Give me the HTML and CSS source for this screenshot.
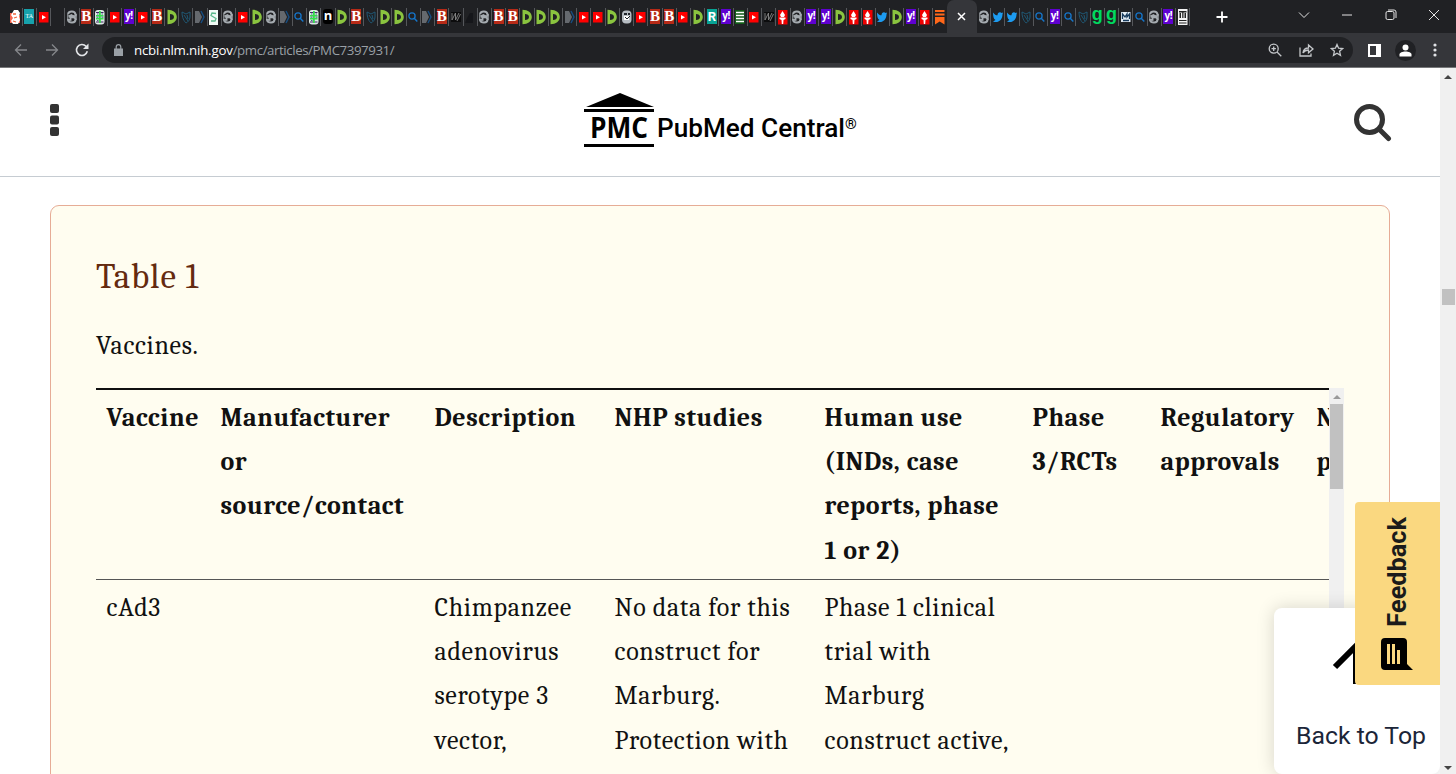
FILE: index.html
```html
<!DOCTYPE html>
<html lang="en">
<head>
<meta charset="utf-8">
<title>PubMed Central</title>
<link rel="stylesheet" href="styles.css">
</head>
<body>
<svg class="sprites" aria-hidden="true">
  <symbol id="i-blank" viewBox="0 0 10 16"></symbol>
  <symbol id="i-pink" viewBox="0 0 10 16"><path fill="#f4654f" d="M0 4h3v10H0zM6 6h4v8H6z"/><path fill="#fff" d="M4 1h4l2 3-1 3 1 4-2 4H3l-2-3 2-3-2-3z"/><path stroke="#f0643c" fill="none" stroke-width="1.3" d="M3 5h3M4 9l3-1M3 12l3 1"/></symbol>
  <symbol id="i-yt" viewBox="0 0 10 16"><rect y="3" width="9.500" height="10.500" fill="#f00"/><path fill="#fff" d="M3 6l4 2.3-4 2.3z"/></symbol>
  <symbol id="i-globe" viewBox="0 0 10 16"><path fill="none" stroke="#a5abb0" stroke-width="2" d="M1 5C2 1.500 8 1.500 8.600 5.500 9 8 6 7.500 4.500 6.200L1.500 7.500M2.500 9c3-1.500 6-1 6 1.500 0 4-6.500 4-7.500.500l3.500-.3"/><path fill="none" stroke="#a5abb0" stroke-width="1" d="M.8 5v6M9.200 5v6"/></symbol>
  <symbol id="i-jar" viewBox="0 0 10 16"><rect y="1" width="9.500" height="14.500" rx="3" fill="#dce9e4"/><path fill="#426" d="M1 3h7.500v1H1zM1 12.500h7.500v1H1z"/><path fill="#35dc4c" d="M4 2h1.800v12H4zM1 6h7.500v1.500H1zM1 9h7.500v1.500H1z"/><path stroke="#246" stroke-width=".8" d="M1.500 8.200h2M6.500 8.200h2M2 5h1.500M6.500 5H8M2 11.500h1.500"/></symbol>
  <symbol id="i-d" viewBox="0 0 10 16"><path fill="#8ac43f" fill-rule="evenodd" d="M.5.8c5.500 0 9.300 3 9.300 7.200s-3.800 7.200-9.300 7.200zM3 5v6c2.500 0 4-1.200 4-3S5.500 5 3 5z"/></symbol>
  <symbol id="i-shield" viewBox="0 0 10 16"><path fill="none" stroke="#1f5874" stroke-width="1" d="M1 3l4 2 4-2v5c0 3-2 5-4 6-2-2-4-5-4-11M3 6l4 6M6 6l1 4"/></symbol>
  <symbol id="i-chev" viewBox="0 0 10 16"><path fill="#65696e" d="M0 2h4l3 6-3 6H0z"/><path fill="none" stroke="#174e83" stroke-width="1.400" d="M6 2l3 6-3 6"/></symbol>
  <symbol id="i-mint" viewBox="0 0 10 16"><path fill="#f2fbf6" d="M0 1h9v15H0z"/><path fill="none" stroke="#5bb98c" stroke-width="1.300" d="M7 4.500L3 4 2 6.500l5 3L6 12H2"/></symbol>
  <symbol id="i-find" viewBox="0 0 10 16"><circle cx="4" cy="7" r="3.100" fill="none" stroke="#1574c8" stroke-width="1.300"/><path stroke="#1574c8" stroke-width="1.400" d="M6 9l3.300 3.500"/></symbol>
  <symbol id="i-w" viewBox="0 0 10 16"><path fill="#0c0c0d" d="M0 3h10v10H0z"/><path stroke="#8a8a8a" stroke-width=".9" fill="none" d="M1 4v7l3.500-7v7L8 4M6 12l3.500-7"/></symbol>
  <symbol id="i-dark" viewBox="0 0 10 16"><path fill="#15161a" d="M0 14l2-5 3-5h3v10z"/></symbol>
  <symbol id="i-face" viewBox="0 0 10 16"><rect y="1.500" width="9.500" height="13" rx="4" fill="#b6bcc2"/><path fill="#20242a" d="M2 4h3v2H2zM6 4h2v2H6z"/><path fill="#fff" d="M2 7h5v4H2z"/><path stroke="#20242a" fill="none" d="M3 8l2 2 3-3"/></symbol>
  <symbol id="i-lines" viewBox="0 0 10 16"><path fill="#115c17" d="M0 1h9.500v14H0z"/><path stroke="#fff" stroke-width="1.500" d="M1 3.500h8M1 6.500h8M1 9.500h8M1 12.500h8"/></symbol>
  <symbol id="i-torch" viewBox="0 0 10 16"><path fill="#f00000" d="M0 1h9.500v14.500H0z"/><path fill="#fff" d="M4.500 2L7 6 6 8H3L2 6zM1.500 8.500h6v1.500l-2 1-.3 4H3.800l-.3-4-2-1z"/></symbol>
  <symbol id="i-tw" viewBox="0 0 10 16"><path fill="#1d9bf0" d="M0 3.500c1.500 2 3 2.800 4.500 2.800C4.500 3.500 7 2.200 8.700 4L10 3.500l-.5 2C9.500 11 5 14.500 0 12.500l2.500-1.500C.5 10 0 7 0 3.500z"/></symbol>
  <symbol id="i-mark" viewBox="0 0 10 16"><path fill="#ff6719" d="M0 1h9.500v2H0zM0 4.500h9.500v2H0zM0 8h9.500v7.500L4.700 12.500 0 15.500z"/></symbol>
  <symbol id="i-m" viewBox="0 0 10 16"><path fill="#e3edf4" d="M0 3h9.500v10H0z"/><path fill="none" stroke="#163a5c" stroke-width="1.300" d="M1.500 10V5l2.500 3 2-3v3l2.500-3v5M2 11.500h6"/></symbol>
  <symbol id="i-t" viewBox="0 0 10 16"><path fill="#f4f4f4" d="M0 0h9.500v16H0z"/><path fill="#222" d="M1 2h7.500v1.500H1zM1.500 4H3v5H1.500zM4.200 2h1.300v7H4.200zM6.500 4H8v5H6.500zM1 11h7.500v1H1zM1 13.500h7.500v1H1z"/></symbol>
</svg>

<header class="browser">
  <div class="tabs">
    <div class="tab-group" data-icons="pink ta yt blank globe b jar yt y yt b d shield chev mint globe yt d globe chev find jar n d b shield d d find chev b w dark globe b b d d d chev yt yt d face yt b b yt d r y lines yt w torch globe y y d torch torch tw d y torch mark"></div>
    <div class="tab-active"><svg width="9" height="9" viewBox="0 0 9 9"><path d="M1 1l7 7M8 1L1 8"/></svg></div>
    <div class="tab-group" data-icons="globe tw tw shield find y find shield g g m find globe y t"></div>
    <svg class="new-tab" width="12" height="12" viewBox="0 0 12 12"><path d="M6 .5v11M.5 6h11"/></svg>
    <div class="window-buttons">
      <svg width="12" height="12" viewBox="0 0 12 12"><path d="M1 3.500l5 5 5-5"/></svg>
      <svg width="12" height="12" viewBox="0 0 12 12"><path d="M1 6h10"/></svg>
      <svg width="12" height="12" viewBox="0 0 12 12"><rect x="1" y="2.500" width="8" height="8" rx="1.500"/><path d="M3 1h6q2 0 2 2v6"/></svg>
      <svg width="12" height="12" viewBox="0 0 12 12"><path d="M1 1l10 10M11 1L1 11"/></svg>
    </div>
  </div>
  <div class="toolbar">
    <svg class="nav dim" width="14" height="14" viewBox="0 0 14 14"><path d="M13 7H1.500M7 1.500L1.500 7 7 12.500"/></svg>
    <svg class="nav dim" width="14" height="14" viewBox="0 0 14 14"><path d="M1 7h11.500M7 1.500L12.500 7 7 12.500"/></svg>
    <svg class="nav reload" width="14" height="14" viewBox="0 0 14 14"><path d="M12.300 8.300A5.500 5.500 0 1 1 11 3.200l1 1"/><path class="solid" d="M13.500.5v5.500H8z"/></svg>
    <div class="address">
      <svg class="lock" width="9" height="12" viewBox="0 0 9 12"><path class="solid" d="M0 4.500h9V12H0z"/><path d="M2.200 5V3a2.300 2.300 0 0 1 4.600 0v2"/></svg>
      <span class="url"><b>ncbi.nlm.nih.gov</b>/pmc/articles/PMC7397931/</span>
      <div class="address-actions">
        <svg width="14" height="14" viewBox="0 0 14 14"><circle cx="5.700" cy="5.700" r="4.500"/><path d="M9 9l4.300 4.300M5.700 3.500v4.400M3.500 5.700h4.400"/></svg>
        <svg width="15" height="14" viewBox="0 0 15 14"><path d="M1 4.500V13h11v-2.500M4 10c.3-3.500 2-5 5.500-5V2L14 6 9.500 9.800V7C7 7 5.500 7.500 4 10z"/></svg>
        <svg width="14" height="14" viewBox="0 0 14 14"><path d="M7 1.500l1.600 3.700 4 .4-3 2.700.9 4L7 10.200l-3.500 2.100.9-4-3-2.700 4-.4z"/></svg>
      </div>
    </div>
    <svg class="panel" width="13" height="13" viewBox="0 0 13 13"><path fill="#fff" d="M0 0h13v13H0z"/><path fill="#35363a" d="M2 2h6v9H2z"/></svg>
    <svg class="avatar" width="21" height="21" viewBox="0 0 21 21"><circle cx="10.500" cy="10.500" r="10.500" fill="#202124"/><circle cx="10.500" cy="7.500" r="3" fill="#fff"/><path fill="#fff" d="M4.500 16.500v-2c0-2 3-3 6-3s6 1 6 3v2z"/></svg>
    <svg class="kebab" width="4" height="14" viewBox="0 0 4 14"><circle cx="2" cy="2" r="1.600"/><circle cx="2" cy="7" r="1.600"/><circle cx="2" cy="12" r="1.600"/></svg>
  </div>
</header>

<div class="viewport">
  <main class="page">
    <div class="site-header">
      <svg class="menu" width="9" height="32" viewBox="0 0 9 32"><rect width="9" height="9" rx="2"/><rect y="11.500" width="9" height="9" rx="2"/><rect y="23" width="9" height="9" rx="2"/></svg>
      <svg class="logo" width="276" height="56" viewBox="0 0 276 56">
        <path d="M36 0l34 14H2zM0 16h70v3H0zM0 51h70v3H0z"/>
        <text class="logo-pmc" x="6" y="45" textLength="58" lengthAdjust="spacingAndGlyphs">PMC</text>
        <text class="logo-name" x="73" y="44" textLength="188" lengthAdjust="spacingAndGlyphs">PubMed Central</text>
        <text class="logo-reg" x="261" y="36">®</text>
      </svg>
      <svg class="search" width="38" height="38" viewBox="0 0 38 38"><circle cx="15.500" cy="15.500" r="13"/><path d="M25 25l9.500 9.500"/></svg>
    </div>

    <section class="card">
      <h1>Table 1</h1>
      <p>Vaccines.</p>
      <div class="table-box">
        <div class="table-clip">
          <table>
            <colgroup><col class="c1"><col class="c2"><col class="c3"><col class="c4"><col class="c5"><col class="c6"><col class="c7"><col class="c8"></colgroup>
            <thead><tr>
              <th>Vaccine</th>
              <th>Manufacturer<br>or<br>source/contact</th>
              <th>Description</th>
              <th>NHP studies</th>
              <th>Human use<br>(INDs, case<br>reports, phase<br>1 or 2)</th>
              <th>Phase<br>3/RCTs</th>
              <th>Regulatory<br>approvals</th>
              <th>N<br>p</th>
            </tr></thead>
            <tbody><tr>
              <td>cAd3</td>
              <td></td>
              <td>Chimpanzee<br>adenovirus<br>serotype 3<br>vector,</td>
              <td>No data for this<br>construct for<br>Marburg.<br>Protection with</td>
              <td>Phase 1 clinical<br>trial with<br>Marburg<br>construct active,</td>
              <td></td><td></td><td></td>
            </tr></tbody>
          </table>
        </div>
        <div class="scroll inner"><span class="arrow up"></span><span class="thumb"></span></div>
      </div>
    </section>

    <div class="to-top">
      <svg width="56" height="56" viewBox="0 0 56 56"><path d="M5 29L26 8l21 21M26 8v38"/></svg>
      <span>Back to Top</span>
    </div>
    <div class="feedback">
      <svg width="32" height="32" viewBox="0 0 32 32"><path d="M4 0h18q4 0 4 4v22l6 6H4q-4 0-4-4V4q0-4 4-4z"/><path class="bars" d="M7.500 6v20M12.500 6v20M17.500 12v14"/></svg>
      <span>Feedback</span>
    </div>
  </main>
  <div class="scroll outer"><span class="arrow up"></span><span class="thumb"></span><span class="arrow down"></span></div>
</div>
<script src="tabs.js"></script>
</body>
</html>
```
FILE: styles.css
```css
* { box-sizing: border-box; }
body { margin: 0; height: 774px; overflow: hidden; display: flex; flex-direction: column; background: #fff; }
svg { display: block; flex: none; }
.sprites { position: absolute; width: 0; height: 0; }

.browser { flex: none; height: 68px; background: #35363a; border-bottom: 1px solid #77787a; }
.tabs { height: 33px; background: #202124; display: flex; align-items: center; padding-left: 8.500px; }
.tab-group { display: flex; }
.fav { width: 14.22px; height: 18px; border-right: 1px solid #55575b; display: flex; justify-content: center; align-items: center; }
.fav svg { width: 10px; height: 16px; }
.tab-group:first-child .fav:last-child { border-right: 0; }
.tab-active { width: 30px; height: 33px; background: #35363a; border-radius: 7px 7px 0 0; display: flex; align-items: center; justify-content: center; }
.tab-active path { stroke: #fff; stroke-width: 1.500; }
.new-tab { margin-left: 25.500px; }
.new-tab path { stroke: #fff; stroke-width: 1.800; }
.window-buttons { display: flex; gap: 31.500px; margin: 0 16px 4px auto; }
.window-buttons svg { fill: none; stroke: #e3e3e3; stroke-width: 1; }

.letter { width: 10px; height: 15px; display: flex; justify-content: center; align-items: center; color: #fff; }
.letter-ta { font: 6px/15px "Liberation Serif", serif; background: #17a2ac; }
.letter-b { font: bold 15px/15px "Liberation Serif", serif; background: #b72a17; }
.letter-y { font: bold 10px/13px "Open Sans", sans-serif; letter-spacing: -.5px; background: #5f01d1; padding-bottom: 2px; }
.letter-n { font: bold 13px/13px "Open Sans", sans-serif; background: #000; border-radius: 3px; padding-bottom: 2px; }
.letter-r { font: bold 13px/15px Roboto, sans-serif; background: #08a394; }
.letter-g { font: bold 18px/15px "Liberation Sans", sans-serif; color: #00d95f; padding-bottom: 4px; }

.toolbar { height: 34px; display: flex; align-items: center; padding: 0 19px 0 14px; }
.nav { margin-right: 16.500px; fill: none; stroke: #e3e5e8; stroke-width: 1.600; }
.nav.dim { stroke: #85878b; stroke-width: 1.300; }
.nav.reload { margin-right: 13px; }
.nav .solid, .lock .solid { stroke: none; fill: #e3e5e8; }
.address { flex: 1; height: 26px; border-radius: 13px; background: #202124; display: flex; align-items: center; padding: 0 9px 0 12px; }
.lock { fill: none; stroke: #9aa0a6; stroke-width: 1.200; }
.lock .solid { fill: #9aa0a6; }
.url { margin-left: 11px; font: 13.300px "Open Sans", sans-serif; letter-spacing: -.43px; color: #9aa0a6; white-space: nowrap; }
.url b { font-weight: 400; letter-spacing: -.2px; color: #fff; }
.address-actions { margin-left: auto; display: flex; gap: 16.500px; }
.address-actions svg { fill: none; stroke: #c4c7ca; stroke-width: 1.300; }
.panel { margin-left: 15px; }
.avatar { margin-left: 14px; }
.kebab { margin-left: 17px; fill: #dfe1e5; }

.viewport { flex: 1; min-height: 0; display: flex; }
.page { position: relative; width: 1440px; overflow: hidden; background: #fff; }
.site-header { height: 109px; border-bottom: 1px solid #c6ccd2; display: flex; justify-content: space-between; align-items: flex-start; padding: 0 48px 0 50px; }
.menu { margin-top: 35.500px; fill: #333; }
.logo { margin: 25px 0 0 31px; fill: #000; }
.logo-pmc { font: bold 28px "Open Sans", sans-serif; }
.logo-name { font: 500 26px Roboto, sans-serif; }
.logo-reg { font: 500 15px Roboto, sans-serif; }
.search { margin-top: 35.500px; fill: none; stroke: #333; stroke-width: 5; stroke-linecap: round; }

.card { height: 640px; margin: 28px 50px 0; padding: 0 45px; background: #fffdf0; border: 1px solid #e6ac96; border-radius: 9px; font-family: Cambria, Caladea, "Liberation Serif", serif; color: #111; }
.card h1 { margin: 47px 0 0; font-size: 35px; font-weight: 400; line-height: 48px; letter-spacing: .9px; color: #642a0f; }
.card p { margin: 23px 0 0; font-size: 26px; line-height: 44px; letter-spacing: .65px; }
.table-box { margin-top: 20px; display: flex; width: 1248px; height: 400px; }
.table-clip { width: 1233px; overflow: hidden; border-top: 2px solid #101010; }
table { table-layout: fixed; width: 1400px; border-collapse: separate; border-spacing: 0; }
th, td { vertical-align: top; text-align: left; padding: 6px 0 6px 10.500px; font-size: 26px; line-height: 44.200px; white-space: nowrap; }
th { letter-spacing: .55px; height: 190px; border-bottom: 1px solid #555; }
td { letter-spacing: .68px; }
.c1 { width: 114px; } .c2 { width: 214px; } .c3 { width: 180px; } .c4 { width: 210px; }
.c5 { width: 208px; } .c6 { width: 128px; } .c7 { width: 156px; } .c8 { width: 190px; }

.scroll { display: flex; flex-direction: column; align-items: center; background: #f0f0f0; }
.arrow { border: 4px solid transparent; border-top: 0; border-bottom: 4px solid #444; }
.arrow.down { border-top: 4px solid #444; border-bottom: 0; }
.inner { width: 15px; padding-top: 7px; }
.inner .arrow { border-bottom-color: #999; }
.inner .thumb { width: 13px; height: 85px; margin-top: 5px; background: #c1c1c1; }
.outer { width: 16px; padding: 7px 0 4px; }
.outer .thumb { width: 13px; height: 16px; margin: 210px 0 auto; background: #c1c1c1; }

.to-top { position: absolute; right: 0; top: 540px; width: 166px; height: 166px; background: #fff; border-radius: 8px; box-shadow: 0 0 18px rgba(0,0,0,.16); display: flex; flex-direction: column; align-items: center; }
.to-top svg { margin: 30px 0 0 2px; fill: none; stroke: #000; stroke-width: 6; }
.to-top span { margin: 26px 0 0 8px; font: 24.800px/32px Roboto, sans-serif; color: #1b2538; white-space: nowrap; }
.feedback { position: absolute; right: 0; top: 434px; width: 85px; height: 183px; padding-bottom: 15px; background: #fad880; border-radius: 4px 0 0 4px; display: flex; flex-direction: column-reverse; align-items: center; }
.feedback svg { margin-left: -1px; }
.feedback .bars { fill: none; stroke: #fad880; stroke-width: 3; }
.feedback span { writing-mode: vertical-rl; transform: rotate(180deg); font: bold 25.300px/30px Roboto, sans-serif; color: #1b1b1b; margin-bottom: 11px; }
```
FILE: tabs.js
```js
// Favicons that are a letter on a plain tile; every other name is a symbol.
var letters = { ta: 'TA', b: 'B', y: 'y!', n: 'n', r: 'R', g: 'g' };

// Fill each tab strip with one favicon per background tab.
document.querySelectorAll('.tab-group').forEach(function (group) {
  group.innerHTML = group.dataset.icons.split(' ').map(function (name) {
    var icon = letters[name]
      ? '<span class="letter letter-' + name + '">' + letters[name] + '</span>'
      : '<svg><use href="#i-' + name + '"/></svg>';
    return '<div class="fav">' + icon + '</div>';
  }).join('');
});
```
